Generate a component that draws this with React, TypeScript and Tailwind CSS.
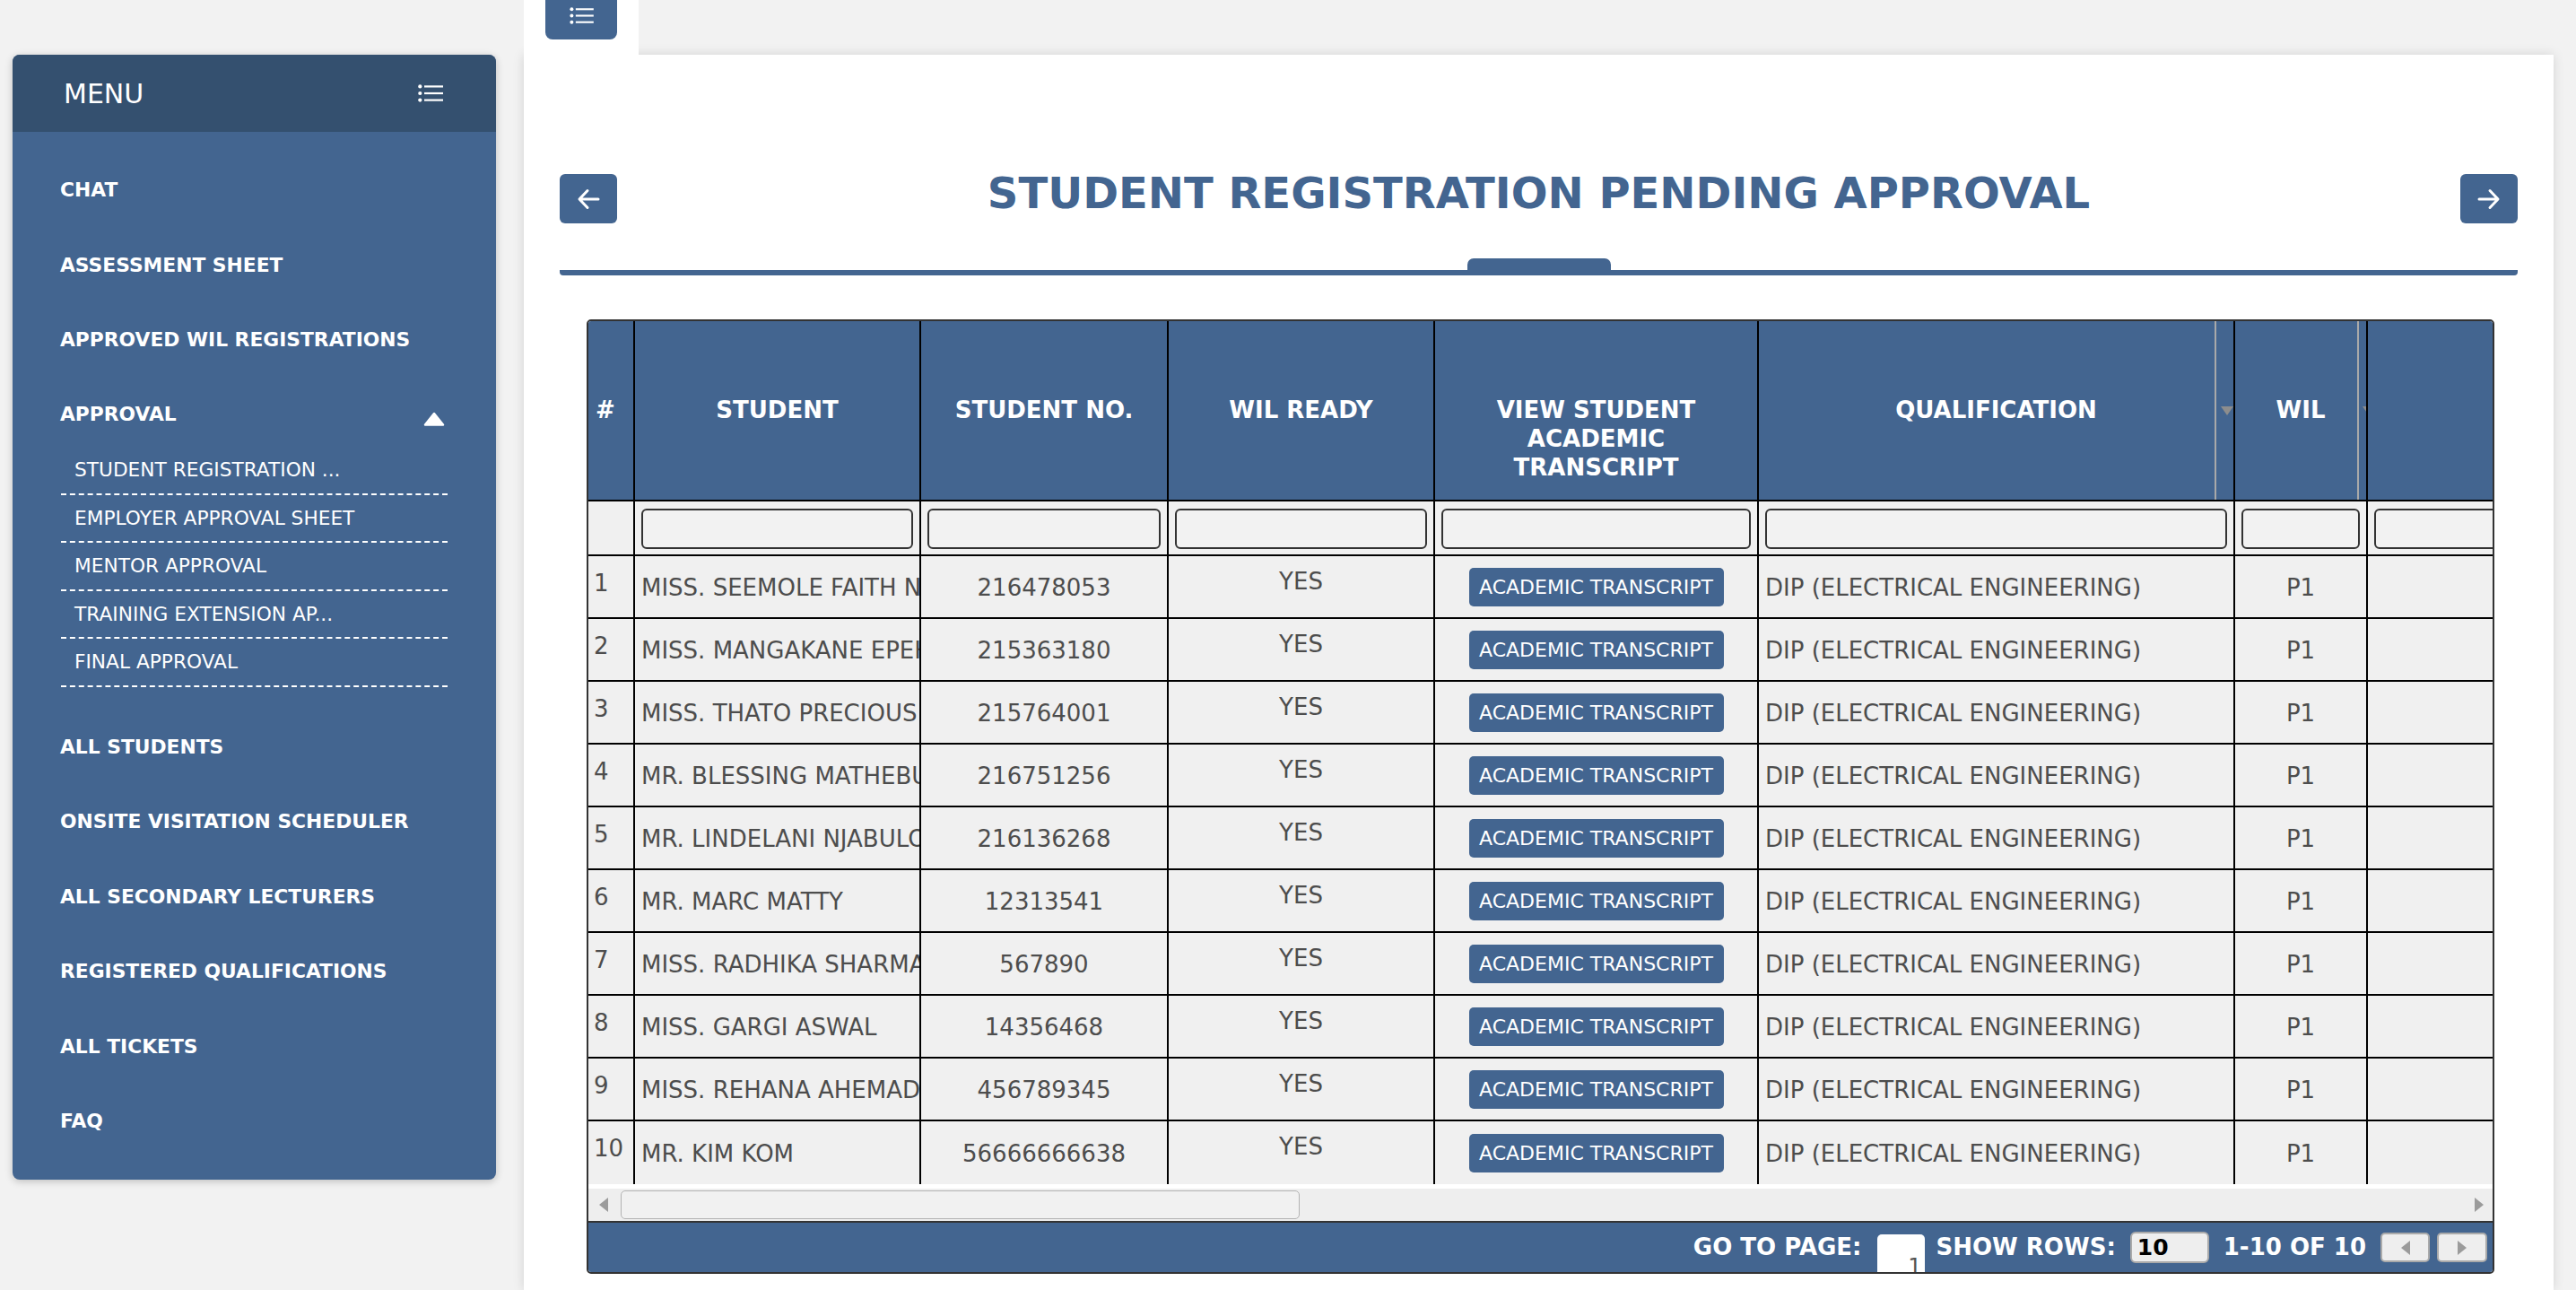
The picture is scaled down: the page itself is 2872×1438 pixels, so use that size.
import React from "react";

const rows = [
  { n: 1, name: "MISS. SEEMOLE FAITH NKOANA", no: "216478053" },
  { n: 2, name: "MISS. MANGAKANE EPEHENG", no: "215363180" },
  { n: 3, name: "MISS. THATO PRECIOUS MOLOI", no: "215764001" },
  { n: 4, name: "MR. BLESSING MATHEBULA", no: "216751256" },
  { n: 5, name: "MR. LINDELANI NJABULO", no: "216136268" },
  { n: 6, name: "MR. MARC MATTY", no: "12313541" },
  { n: 7, name: "MISS. RADHIKA SHARMA", no: "567890" },
  { n: 8, name: "MISS. GARGI ASWAL", no: "14356468" },
  { n: 9, name: "MISS. REHANA AHEMAD", no: "456789345" },
  { n: 10, name: "MR. KIM KOM", no: "56666666638" },
];

const subItems = [
  "STUDENT REGISTRATION ...",
  "EMPLOYER APPROVAL SHEET",
  "MENTOR APPROVAL",
  "TRAINING EXTENSION AP...",
  "FINAL APPROVAL",
];

const ListIcon = ({ className }: { className?: string }) => (
  <svg viewBox="0 0 28 20" className={className} fill="white">
    <circle cx="2.3" cy="2.4" r="2.1" />
    <circle cx="2.3" cy="10" r="2.1" />
    <circle cx="2.3" cy="17.6" r="2.1" />
    <rect x="7" y="1.3" width="21" height="2.2" />
    <rect x="7" y="8.9" width="21" height="2.2" />
    <rect x="7" y="16.5" width="21" height="2.2" />
  </svg>
);

const ArrowIcon = ({ dir }: { dir: "left" | "right" }) => (
  <svg
    viewBox="0 0 26 26"
    className={"w-[26px] h-[26px] " + (dir === "right" ? "rotate-180" : "")}
    fill="none"
    stroke="white"
    strokeWidth="3"
    strokeLinecap="round"
    strokeLinejoin="round"
  >
    <path d="M24 13H3.5M12 3.5L3 13l9 9.5" />
  </svg>
);

const MenuItem = ({ label }: { label: string }) => (
  <div className="h-[83.5px] flex items-center pl-[53px] text-[21.8px] font-bold text-white">
    {label}
  </div>
);

const Sidebar = () => (
  <aside className="ml-[14px] mt-[61px] w-[539px] h-[1254px] shrink-0 rounded-[8px] bg-[#436590] shadow-[0_2px_8px_rgba(0,0,0,0.22)] overflow-hidden flex flex-col">
    <div className="h-[86px] bg-[#34506f] flex items-center justify-between pl-[57px] pr-[59px]">
      <span className="text-[30px] text-white">MENU</span>
      <ListIcon className="w-[28px] h-[20px]" />
    </div>
    <nav className="pt-[24px] flex flex-col">
      <MenuItem label="CHAT" />
      <MenuItem label="ASSESSMENT SHEET" />
      <MenuItem label="APPROVED WIL REGISTRATIONS" />
      <div className="h-[76.5px] pt-[6px] flex items-center justify-between pl-[53px] pr-[57px] text-[21.8px] font-bold text-white">
        APPROVAL
        <svg viewBox="0 0 24 16" className="w-[24px] h-[16px] mt-[8px]" fill="white" stroke="white" strokeWidth="2.5" strokeLinejoin="round">
          <path d="M2 14.5L12 2l10 12.5z" />
        </svg>
      </div>
      <div className="mx-[54px] flex flex-col">
        {subItems.map((s) => (
          <div
            key={s}
            className="h-[53.5px] flex items-center pl-[15px] pt-[2px] border-b-2 border-dashed border-white text-[21.7px] text-white"
          >
            {s}
          </div>
        ))}
      </div>
      <div className="mt-[26px] flex flex-col">
        <MenuItem label="ALL STUDENTS" />
        <MenuItem label="ONSITE VISITATION SCHEDULER" />
        <MenuItem label="ALL SECONDARY LECTURERS" />
        <MenuItem label="REGISTERED QUALIFICATIONS" />
        <MenuItem label="ALL TICKETS" />
        <MenuItem label="FAQ" />
      </div>
    </nav>
  </aside>
);

const SortMark = ({ line }: { line: string }) => (
  <div className={"absolute top-0 bottom-0 w-[2px] bg-[#a9a9a9] " + line} />
);

const HeaderRow = () => (
  <div className="flex h-[201px] border-b-2 border-black bg-[#436590] text-white font-bold text-[26px] leading-[32px]">
    <div className="w-[52px] shrink-0 border-r-2 border-black pt-[83px] pl-[8px]">#</div>
    <div className="w-[319px] shrink-0 border-r-2 border-black pt-[83px] px-[16px] text-center">STUDENT</div>
    <div className="w-[276px] shrink-0 border-r-2 border-black pt-[83px] px-[16px] text-center">STUDENT NO.</div>
    <div className="w-[297px] shrink-0 border-r-2 border-black pt-[83px] px-[16px] text-center">WIL READY</div>
    <div className="w-[361px] shrink-0 border-r-2 border-black pt-[83px] px-[16px] text-center">
      VIEW STUDENT ACADEMIC TRANSCRIPT
    </div>
    <div className="relative w-[531px] shrink-0 border-r-2 border-black pt-[83px] px-[16px] text-center overflow-hidden">
      QUALIFICATION
      <SortMark line="right-[19px]" />
      <svg viewBox="0 0 14 10" className="absolute right-0 top-[95px] w-[14px] h-[10px]" fill="#8d8d8d">
        <path d="M0 0h14L7 10z" />
      </svg>
    </div>
    <div className="relative w-[148px] shrink-0 border-r-2 border-black pt-[83px] px-[16px] text-center overflow-hidden">
      WIL
      <SortMark line="right-[8px]" />
      <svg viewBox="0 0 14 10" className="absolute right-[-10px] top-[95px] w-[14px] h-[10px]" fill="#8d8d8d">
        <path d="M0 0h14L7 10z" />
      </svg>
    </div>
    <div className="w-[220px] shrink-0" />
  </div>
);

const FilterBox = () => (
  <div className="h-[45px] border-2 border-[#333] rounded-[6px] bg-[#f2f2f2]" />
);

const FilterRow = () => (
  <div className="flex h-[61px] border-b-2 border-black bg-[#f0f0f0]">
    <div className="w-[52px] shrink-0 border-r-2 border-black" />
    {[319, 276, 297, 361, 531, 148].map((w) => (
      <div
        key={w}
        className="shrink-0 border-r-2 border-black px-[7px] pt-[8px]"
        style={{ width: w }}
      >
        <FilterBox />
      </div>
    ))}
    <div className="w-[220px] shrink-0 pl-[7px] pt-[8px]">
      <FilterBox />
    </div>
  </div>
);

const BodyRow = ({ r, last }: { r: (typeof rows)[number]; last: boolean }) => (
  <div
    className={
      "flex h-[70px] bg-[#f0f0f0] text-[26px] text-[#4d4d4d] " +
      (last ? "" : "border-b-2 border-black")
    }
  >
    <div className="w-[52px] shrink-0 border-r-2 border-black pl-[6px] pt-[15px] leading-[30px]">
      {r.n}
    </div>
    <div className="w-[319px] shrink-0 border-r-2 border-black pl-[7px] pt-[2px] flex items-center overflow-hidden whitespace-nowrap">
      {r.name}
    </div>
    <div className="w-[276px] shrink-0 border-r-2 border-black pt-[2px] flex items-center justify-center">
      {r.no}
    </div>
    <div className="w-[297px] shrink-0 border-r-2 border-black pt-[13px] leading-[30px] text-center">
      YES
    </div>
    <div className="w-[361px] shrink-0 border-r-2 border-black flex items-center justify-center">
      <div className="w-[284px] h-[43px] rounded-[5px] bg-[#436590] text-white text-[22px] flex items-center justify-center">
        ACADEMIC TRANSCRIPT
      </div>
    </div>
    <div className="w-[531px] shrink-0 border-r-2 border-black pl-[7px] pt-[2px] flex items-center whitespace-nowrap">
      DIP (ELECTRICAL ENGINEERING)
    </div>
    <div className="w-[148px] shrink-0 border-r-2 border-black pt-[2px] flex items-center justify-center">
      P1
    </div>
    <div className="w-[220px] shrink-0" />
  </div>
);

const Tri = ({ dir }: { dir: "left" | "right" }) => (
  <svg viewBox="0 0 10 16" className="w-[10px] h-[16px]" fill="#9b9b9b">
    {dir === "left" ? <path d="M10 0v16L0 8z" /> : <path d="M0 0v16l10-8z" />}
  </svg>
);

const Table = () => (
  <div className="ml-[30px] mt-[49px] w-[2127px] border-2 border-[#333] rounded-[5px] overflow-hidden bg-white">
    <div className="overflow-hidden">
      <HeaderRow />
      <FilterRow />
      {rows.map((r, i) => (
        <BodyRow key={r.n} r={r} last={i === rows.length - 1} />
      ))}
    </div>
    <div className="h-[5px] bg-white" />
    <div className="h-[36px] bg-[#eeeeee] flex items-center">
      <div className="ml-[12px]">
        <Tri dir="left" />
      </div>
      <div className="ml-[14px] w-[757px] h-[32px] rounded-[5px] border border-[#b3b3b3] bg-[#f1f1f1]" />
      <div className="ml-auto mr-[10px]">
        <Tri dir="right" />
      </div>
    </div>
    <div className="h-[57px] border-t-2 border-[#333] bg-[#436590] flex items-center justify-end pr-[6px] text-white font-bold text-[26px]">
      <span>GO TO PAGE:</span>
      <div className="ml-[17px] self-end w-[53px] h-[42px] rounded-t-[5px] bg-white flex justify-end items-start pt-[24px] pr-[3px] overflow-hidden">
        <span className="text-[24px] leading-none font-normal text-[#555]">1</span>
      </div>
      <span className="ml-[13px]">SHOW ROWS:</span>
      <div className="ml-[16px] w-[88px] h-[35px] rounded-[6px] border-2 border-[#aaa] bg-[#eeeeee] flex items-center pl-[6px] text-black text-[25px] leading-none">
        10
      </div>
      <span className="ml-[16px]">1-10 OF 10</span>
      <div className="ml-[16px] w-[55px] h-[33px] rounded-[5px] border-2 border-[#aaa] bg-[#eeeeee] flex items-center justify-center">
        <Tri dir="left" />
      </div>
      <div className="ml-[8px] w-[56px] h-[33px] rounded-[5px] border-2 border-[#aaa] bg-[#eeeeee] flex items-center justify-center">
        <Tri dir="right" />
      </div>
    </div>
  </div>
);

export default function App() {
  return (
    <div className="w-[2872px] h-[1438px] overflow-hidden bg-[#f2f2f2] flex font-['DejaVu_Sans',sans-serif]">
      <Sidebar />
      <main className="ml-[31px] w-[2263px] shrink-0 flex flex-col">
        <div className="h-[61px] shrink-0 flex">
          <div className="relative z-10 w-[128px] h-[61px] bg-white pl-[24px]">
            <div className="w-[80px] h-[44px] rounded-b-[8px] bg-[#436590] flex justify-center pt-[8px]">
              <ListIcon className="w-[27px] h-[19px]" />
            </div>
          </div>
        </div>
        <section className="flex-1 bg-white shadow-[0_0_12px_rgba(0,0,0,0.13)] px-[40px] pt-[126px]">
          <div className="flex items-start">
            <button className="mt-[7px] w-[64px] h-[55px] rounded-[6px] bg-[#436590] flex items-center justify-center">
              <ArrowIcon dir="left" />
            </button>
            <h1 className="flex-1 text-center text-[48px] leading-[56px] font-bold text-[#436590]">
              STUDENT REGISTRATION PENDING APPROVAL
            </h1>
            <button className="mt-[7px] w-[64px] h-[55px] rounded-[6px] bg-[#436590] flex items-center justify-center">
              <ArrowIcon dir="right" />
            </button>
          </div>
          <div className="mt-[39px]">
            <div className="mx-auto w-[160px] h-[13px] rounded-t-[7px] bg-[#436590]" />
            <div className="h-[6px] rounded-b-[4px] bg-[#436590]" />
          </div>
          <Table />
        </section>
      </main>
    </div>
  );
}
